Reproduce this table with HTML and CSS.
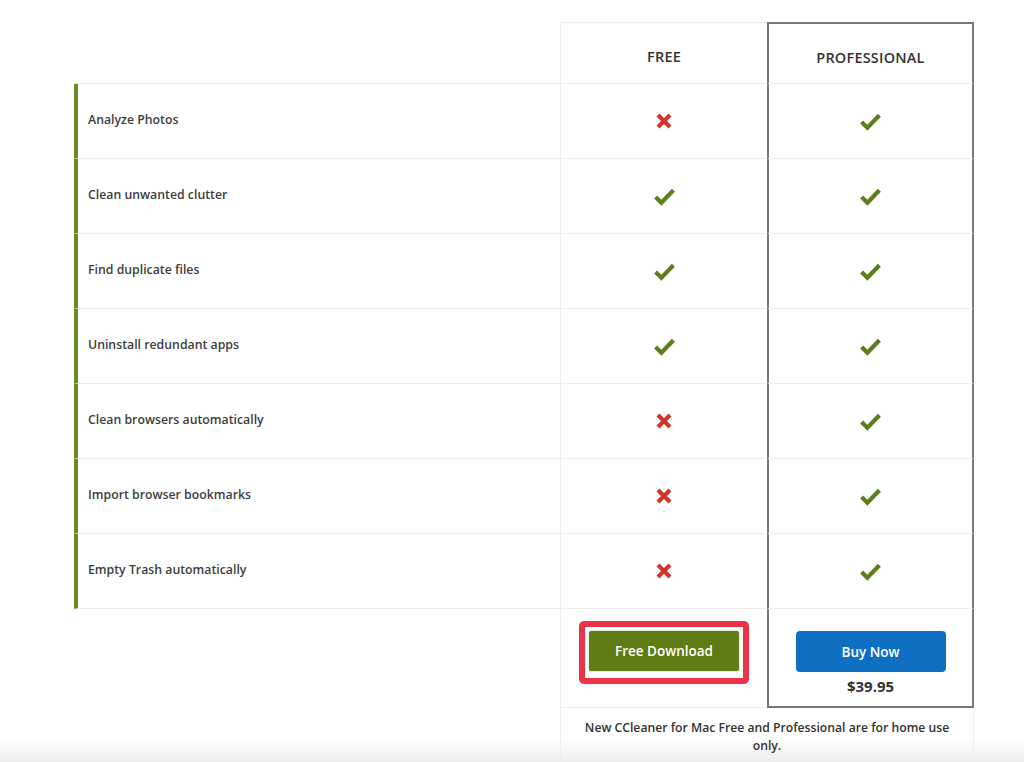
FILE: index.html
```html
<!DOCTYPE html>
<html>
<head>
<meta charset="utf-8">
<link rel="stylesheet" href="styles.css">
</head>
<body>
<div class="table">
  <div class="row head">
    <div class="feat blank"></div>
    <div class="col free">FREE</div>
    <div class="col pro">PROFESSIONAL</div>
  </div>

  <div class="row">
    <div class="feat">Analyze Photos</div>
    <div class="col free"><svg class="ic x" viewBox="0 0 18 18"><path d="M3 3L15 15M15 3L3 15"/></svg></div>
    <div class="col pro"><svg class="ic ok" viewBox="0 0 22 18"><path d="M2.5 9.5L8 15L19.5 3"/></svg></div>
  </div>
  <div class="row">
    <div class="feat">Clean unwanted clutter</div>
    <div class="col free"><svg class="ic ok" viewBox="0 0 22 18"><path d="M2.5 9.5L8 15L19.5 3"/></svg></div>
    <div class="col pro"><svg class="ic ok" viewBox="0 0 22 18"><path d="M2.5 9.5L8 15L19.5 3"/></svg></div>
  </div>
  <div class="row">
    <div class="feat">Find duplicate files</div>
    <div class="col free"><svg class="ic ok" viewBox="0 0 22 18"><path d="M2.5 9.5L8 15L19.5 3"/></svg></div>
    <div class="col pro"><svg class="ic ok" viewBox="0 0 22 18"><path d="M2.5 9.5L8 15L19.5 3"/></svg></div>
  </div>
  <div class="row">
    <div class="feat">Uninstall redundant apps</div>
    <div class="col free"><svg class="ic ok" viewBox="0 0 22 18"><path d="M2.5 9.5L8 15L19.5 3"/></svg></div>
    <div class="col pro"><svg class="ic ok" viewBox="0 0 22 18"><path d="M2.5 9.5L8 15L19.5 3"/></svg></div>
  </div>
  <div class="row">
    <div class="feat">Clean browsers automatically</div>
    <div class="col free"><svg class="ic x" viewBox="0 0 18 18"><path d="M3 3L15 15M15 3L3 15"/></svg></div>
    <div class="col pro"><svg class="ic ok" viewBox="0 0 22 18"><path d="M2.5 9.5L8 15L19.5 3"/></svg></div>
  </div>
  <div class="row">
    <div class="feat">Import browser bookmarks</div>
    <div class="col free"><svg class="ic x" viewBox="0 0 18 18"><path d="M3 3L15 15M15 3L3 15"/></svg></div>
    <div class="col pro"><svg class="ic ok" viewBox="0 0 22 18"><path d="M2.5 9.5L8 15L19.5 3"/></svg></div>
  </div>
  <div class="row">
    <div class="feat">Empty Trash automatically</div>
    <div class="col free"><svg class="ic x" viewBox="0 0 18 18"><path d="M3 3L15 15M15 3L3 15"/></svg></div>
    <div class="col pro"><svg class="ic ok" viewBox="0 0 22 18"><path d="M2.5 9.5L8 15L19.5 3"/></svg></div>
  </div>

  <div class="row actions">
    <div class="spacer"></div>
    <div class="col free">
      <div class="highlight"><a class="btn green">Free Download</a></div>
    </div>
    <div class="col pro">
      <a class="btn blue">Buy Now</a>
      <div class="price">$39.95</div>
    </div>
  </div>

  <div class="row note">
    <div class="spacer"></div>
    <div class="notecell">New CCleaner for Mac Free and Professional are for home use only.</div>
  </div>
</div>
</body>
</html>
```

FILE: styles.css
```css
html, body {
  margin: 0;
  padding: 0;
}
body {
  font-family: "Open Sans", "Liberation Sans", sans-serif;
  color: #3a3a3a;
  height: 762px;
  overflow: hidden;
  background: linear-gradient(to bottom, #ffffff 0, #ffffff 738px, #eeeeee 762px);
}
.table {
  margin: 22px 0 0 74px;
  width: 900px;
}
.row {
  display: grid;
  grid-template-columns: 486px 207px 207px;
}
.feat {
  box-sizing: border-box;
  height: 75px;
  border-left: 4px solid #6b8c21;
  border-bottom: 1px solid #eeeeee;
  padding: 0 0 4px 10px;
  display: flex;
  align-items: center;
  font-size: 12.3px;
  font-weight: 600;
  color: #3d3d3d;
  background: #fff;
}
.feat.blank {
  border-left: none;
  height: 62px;
}
.col {
  box-sizing: border-box;
  height: 75px;
  display: flex;
  align-items: center;
  justify-content: center;
  border-bottom: 1px solid #eeeeee;
  background: #fff;
}
.free {
  border-left: 1px solid #eeeeee;
}
.pro {
  border-left: 2px solid #777777;
  border-right: 2px solid #777777;
}
.head .col {
  height: 62px;
  border-top: 1px solid #eeeeee;
  font-size: 14.5px;
  font-weight: 600;
  color: #333;
  letter-spacing: 0.2px;
  padding-top: 6px;
}
.head .pro {
  border-top: 2px solid #777777;
  padding-top: 7px;
}
.ic {
  fill: none;
  stroke-linecap: butt;
}
.ic.x {
  width: 18px;
  height: 18px;
  stroke: #d1342b;
  stroke-width: 4.2;
}
.ic.ok {
  width: 23px;
  height: 19px;
  stroke: #5c7f1c;
  stroke-width: 4;
}
.actions .col {
  height: 99px;
  flex-direction: column;
  justify-content: flex-start;
}
.actions .free {
  padding-top: 12px;
}
.actions .pro {
  border-bottom: 2px solid #777777;
  padding-top: 22px;
}
.spacer {
  background: transparent;
}
.highlight {
  border: 6px solid #ec3347;
  border-radius: 5px;
  padding: 3px 3px 6px 3px;
  background: #fff;
}
.btn {
  display: flex;
  align-items: center;
  justify-content: center;
  height: 42px;
  border-radius: 3px;
  color: #fff;
  font-size: 13.5px;
  font-weight: 600;
  box-sizing: border-box;
}
.btn.green {
  width: 152px;
  background: #5e7b14;
  border: 1px solid #e8edd6;
}
.btn.blue {
  width: 150px;
  height: 41px;
  background: #0f6fc3;
  border-radius: 4px;
}
.price {
  margin-top: 4px;
  font-size: 15px;
  font-weight: 700;
  color: #333;
}
.note .notecell {
  grid-column: 2 / 4;
  box-sizing: border-box;
  border-left: 1px solid #eeeeee;
  border-right: 1px solid #eeeeee;
  padding: 11px 12px 0;
  height: 60px;
  text-align: center;
  font-size: 12.2px;
  font-weight: 600;
  line-height: 18px;
  color: #333;
}
```
